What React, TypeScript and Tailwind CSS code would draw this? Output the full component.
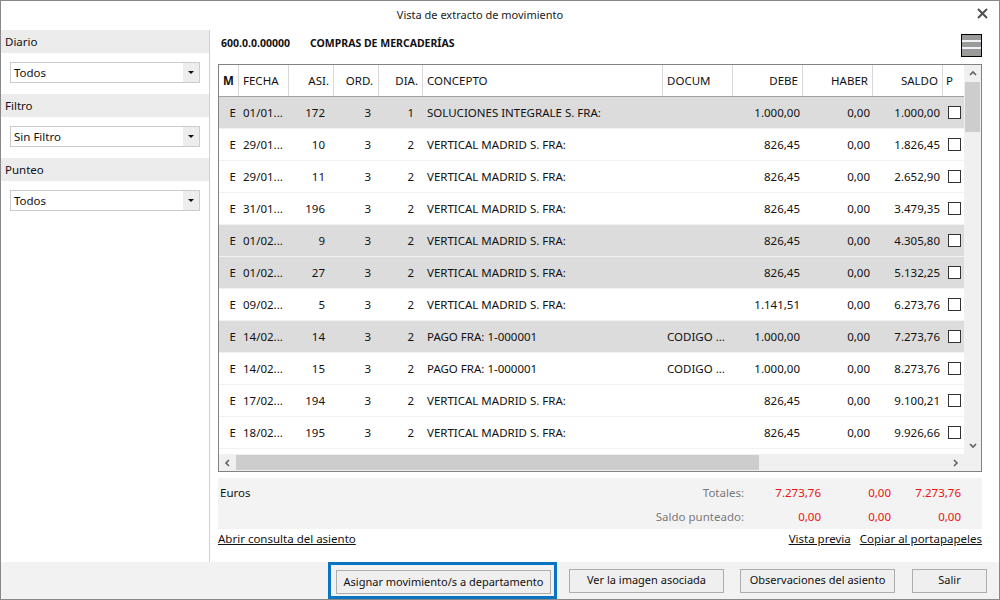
import React from 'react';

type Row = {
  fecha: string;
  asi: string;
  dia: string;
  concepto: string;
  docum: string;
  debe: string;
  saldo: string;
  gray: boolean;
};

const rows: Row[] = [
  { fecha: '01/01...', asi: '172', dia: '1', concepto: 'SOLUCIONES INTEGRALE S. FRA:', docum: '', debe: '1.000,00', saldo: '1.000,00', gray: true },
  { fecha: '29/01...', asi: '10', dia: '2', concepto: 'VERTICAL MADRID S. FRA:', docum: '', debe: '826,45', saldo: '1.826,45', gray: false },
  { fecha: '29/01...', asi: '11', dia: '2', concepto: 'VERTICAL MADRID S. FRA:', docum: '', debe: '826,45', saldo: '2.652,90', gray: false },
  { fecha: '31/01...', asi: '196', dia: '2', concepto: 'VERTICAL MADRID S. FRA:', docum: '', debe: '826,45', saldo: '3.479,35', gray: false },
  { fecha: '01/02...', asi: '9', dia: '2', concepto: 'VERTICAL MADRID S. FRA:', docum: '', debe: '826,45', saldo: '4.305,80', gray: true },
  { fecha: '01/02...', asi: '27', dia: '2', concepto: 'VERTICAL MADRID S. FRA:', docum: '', debe: '826,45', saldo: '5.132,25', gray: true },
  { fecha: '09/02...', asi: '5', dia: '2', concepto: 'VERTICAL MADRID S. FRA:', docum: '', debe: '1.141,51', saldo: '6.273,76', gray: false },
  { fecha: '14/02...', asi: '14', dia: '2', concepto: 'PAGO FRA: 1-000001', docum: 'CODIGO ...', debe: '1.000,00', saldo: '7.273,76', gray: true },
  { fecha: '14/02...', asi: '15', dia: '2', concepto: 'PAGO FRA: 1-000001', docum: 'CODIGO ...', debe: '1.000,00', saldo: '8.273,76', gray: false },
  { fecha: '17/02...', asi: '194', dia: '2', concepto: 'VERTICAL MADRID S. FRA:', docum: '', debe: '826,45', saldo: '9.100,21', gray: false },
  { fecha: '18/02...', asi: '195', dia: '2', concepto: 'VERTICAL MADRID S. FRA:', docum: '', debe: '826,45', saldo: '9.926,66', gray: false },
];

function Chevron({ dir }: { dir: 'up' | 'down' | 'left' | 'right' }) {
  const pts = {
    up: '1,5 4,2 7,5',
    down: '1,2 4,5 7,2',
    left: '5,1 2,4 5,7',
    right: '2,1 5,4 2,7',
  }[dir];
  return (
    <svg width="8" height="8" viewBox="0 0 8 8">
      <polyline points={pts} fill="none" stroke="#606060" strokeWidth="1.6" />
    </svg>
  );
}

function Select({ value }: { value: string }) {
  return (
    <div className="mx-[9px] flex h-[21px] border border-[#cccccc] bg-white">
      <div className="flex flex-1 items-center pl-[3px] text-[#111]">{value}</div>
      <div className="flex w-[16px] items-center justify-center bg-[#ededed]">
        <div className="h-0 w-0 border-x-[3px] border-t-[3px] border-x-transparent border-t-[#111]" />
      </div>
    </div>
  );
}

function Section({ label, value }: { label: string; value: string }) {
  return (
    <div>
      <div className="flex h-[23px] items-center bg-[#ececec] pl-[4px] text-[#111]">{label}</div>
      <div className="pb-[11px] pt-[9px]">
        <Select value={value} />
      </div>
    </div>
  );
}

function Check() {
  return <div className="h-[13px] w-[13px] border border-[#333] bg-white" />;
}

export default function App() {
  return (
    <div className="flex h-[600px] w-[1000px] flex-col border border-[#888] bg-white text-[11.5px] text-[#111]" style={{ fontFamily: '"Noto Sans", "Open Sans", sans-serif' }}>
      {/* title */}
      <div className="relative flex h-[29px] shrink-0 items-center justify-center pr-[40px] text-[11px] text-[#222]">
        Vista de extracto de movimiento
        <svg className="absolute right-[11px] top-[7px]" width="11" height="11" viewBox="0 0 11 11">
          <path d="M1 1 L10 10 M10 1 L1 10" stroke="#505050" strokeWidth="2" />
        </svg>
      </div>

      <div className="flex min-h-0 flex-1">
        {/* left filters */}
        <div className="w-[209px] shrink-0 border-r border-[#d0d0d0]">
          <Section label="Diario" value="Todos" />
          <Section label="Filtro" value="Sin Filtro" />
          <Section label="Punteo" value="Todos" />
        </div>

        {/* right content */}
        <div className="flex flex-1 flex-col pl-[8px] pr-[17px]">
          <div className="mb-[4px] flex h-[30px] items-center pb-[2px] text-[10.5px] font-bold text-[#111]">
            <span className="ml-[3px] w-[89px]">600.0.0.00000</span>
            <span className="flex-1">COMPRAS DE MERCADERÍAS</span>
            <div className="mt-[2px] flex h-[23px] w-[21px] flex-col border border-black">
              <div className="h-[5px] bg-[#9a9a9a]" />
              <div className="h-[2px] bg-[#eef2f8]" />
              <div className="h-[5px] bg-[#9a9a9a]" />
              <div className="h-[2px] bg-[#eef2f8]" />
              <div className="flex-1 bg-[#9a9a9a]" />
            </div>
          </div>

          {/* table */}
          <div className="flex h-[408px] flex-col border border-[#828282]">
            <div className="flex min-h-0 flex-1">
              <div className="flex w-[745px] flex-col overflow-hidden whitespace-nowrap">
                <div className="flex h-[32px] shrink-0 border-b border-[#a0a0a0]">
                  <div className="flex w-[20px] items-center justify-center border-r border-[#d9d9d9] font-bold">M</div>
                  <div className="flex w-[50px] items-center border-r border-[#d9d9d9] pl-[4px]">FECHA</div>
                  <div className="flex w-[45px] items-center justify-end border-r border-[#d9d9d9] pr-[4px]">ASI.</div>
                  <div className="flex w-[45px] items-center justify-end border-r border-[#d9d9d9] pr-[5px]">ORD.</div>
                  <div className="flex w-[44px] items-center justify-end border-r border-[#d9d9d9] pr-[4px]">DIA.</div>
                  <div className="flex w-[240px] items-center border-r border-[#d9d9d9] pl-[4px]">CONCEPTO</div>
                  <div className="flex w-[70px] items-center border-r border-[#d9d9d9] pl-[4px]">DOCUM</div>
                  <div className="flex w-[70px] items-center justify-end border-r border-[#d9d9d9] pr-[4px]">DEBE</div>
                  <div className="flex w-[70px] items-center justify-end border-r border-[#d9d9d9] pr-[4px]">HABER</div>
                  <div className="flex w-[70px] items-center justify-end border-r border-[#d9d9d9] pr-[4px]">SALDO</div>
                  <div className="flex w-[21px] items-center pl-[3px]">P</div>
                </div>
                {rows.map((r, i) => (
                  <div key={i} className={`flex h-[32px] shrink-0 border-b border-[#f2f2f2] ${r.gray ? 'bg-[#dcdcdc]' : 'bg-white'}`}>
                    <div className="flex w-[20px] items-center justify-end pr-[3px]">E</div>
                    <div className="flex w-[50px] items-center pl-[4px]">{r.fecha}</div>
                    <div className="flex w-[45px] items-center justify-end pr-[9px]">{r.asi}</div>
                    <div className="flex w-[45px] items-center justify-end pr-[8px]">3</div>
                    <div className="flex w-[44px] items-center justify-end pr-[9px]">{r.dia}</div>
                    <div className="flex w-[240px] items-center pl-[4px]">{r.concepto}</div>
                    <div className="flex w-[70px] items-center pl-[4px]">{r.docum}</div>
                    <div className="flex w-[70px] items-center justify-end pr-[3px]">{r.debe}</div>
                    <div className="flex w-[70px] items-center justify-end pr-[3px]">0,00</div>
                    <div className="flex w-[70px] items-center justify-end pr-[3px]">{r.saldo}</div>
                    <div className="flex w-[21px] items-center pl-[5px]">
                      <Check />
                    </div>
                  </div>
                ))}
                <div className="h-[6px] bg-white" />
              </div>
              {/* vertical scrollbar */}
              <div className="flex w-[17px] flex-col bg-[#f0f0f0]">
                <div className="flex h-[17px] items-center justify-center"><Chevron dir="up" /></div>
                <div className="mx-[1px] h-[50px] bg-[#cdcdcd]" />
                <div className="flex-1" />
                <div className="flex h-[17px] items-center justify-center"><Chevron dir="down" /></div>
              </div>
            </div>
            {/* horizontal scrollbar */}
            <div className="flex h-[17px] shrink-0 bg-[#f0f0f0]">
              <div className="flex w-[17px] items-center justify-center"><Chevron dir="left" /></div>
              <div className="my-[1px] w-[523px] bg-[#cdcdcd]" />
              <div className="flex-1" />
              <div className="flex w-[17px] items-center justify-center"><Chevron dir="right" /></div>
              <div className="w-[17px]" />
            </div>
          </div>

          {/* totals */}
          <div className="mt-[6px] flex h-[51px] bg-[#f3f3f3] pt-[3px]">
            <div className="flex h-[24px] flex-1 items-center pl-[2px]">Euros</div>
            <div className="grid grid-cols-[auto_70px_70px_70px] pr-[21px]">
              <div className="flex h-[24px] items-center justify-end pr-[7px] text-[#7a7a7a]">Totales:</div>
              <div className="flex items-center justify-end text-[#f01010]">7.273,76</div>
              <div className="flex items-center justify-end text-[#f01010]">0,00</div>
              <div className="flex items-center justify-end text-[#f01010]">7.273,76</div>
              <div className="flex h-[24px] items-center justify-end pr-[7px] text-[#7a7a7a]">Saldo punteado:</div>
              <div className="flex items-center justify-end text-[#f01010]">0,00</div>
              <div className="flex items-center justify-end text-[#f01010]">0,00</div>
              <div className="flex items-center justify-end text-[#f01010]">0,00</div>
            </div>
          </div>

          {/* links */}
          <div className="flex h-[19px] items-center text-[#111]">
            <a href="#" className="underline">Abrir consulta del asiento</a>
            <div className="flex-1" />
            <a href="#" className="underline">Vista previa</a>
            <a href="#" className="ml-[9px] underline">Copiar al portapapeles</a>
          </div>
        </div>
      </div>

      {/* footer */}
      <div className="flex h-[37px] shrink-0 items-center justify-end whitespace-nowrap bg-[#f2f2f2] pr-[12px] text-[11px] text-[#111]">
        <div className="flex h-[37px] w-[229px] border-[3px] border-[#0a74c4] pl-[5px] pt-[5px]">
          <button className="h-[24px] w-[215px] border border-[#adadad] bg-[#efefef]">Asignar movimiento/s a departamento</button>
        </div>
        <button className="ml-[12px] h-[24px] w-[155px] border border-[#adadad] bg-[#efefef]">Ver la imagen asociada</button>
        <button className="ml-[16px] h-[24px] w-[155px] border border-[#adadad] bg-[#efefef]">Observaciones del asiento</button>
        <button className="ml-[17px] h-[24px] w-[75px] border border-[#adadad] bg-[#efefef]">Salir</button>
      </div>
    </div>
  );
}
